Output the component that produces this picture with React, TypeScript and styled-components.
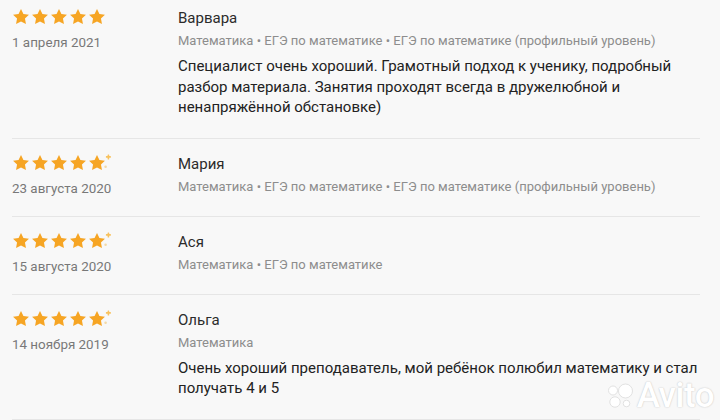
import React from "react";
import styled, { createGlobalStyle } from "styled-components";

const GlobalStyle = createGlobalStyle`
  html, body {
    margin: 0;
    padding: 0;
    background: #f8f8f8;
    font-family: Roboto, "Liberation Sans", Arial, sans-serif;
  }
`;

type Review = {
  name: string;
  date: string;
  tags: string[];
  text?: string;
  half?: boolean;
};

const reviews: Review[] = [
  {
    name: "Варвара",
    date: "1 апреля 2021",
    tags: [
      "Математика",
      "ЕГЭ по математике",
      "ЕГЭ по математике (профильный уровень)",
    ],
    text: "Специалист очень хороший. Грамотный подход к ученику, подробный разбор материала. Занятия проходят всегда в дружелюбной и ненапряжённой обстановке)",
  },
  {
    name: "Мария",
    date: "23 августа 2020",
    tags: [
      "Математика",
      "ЕГЭ по математике",
      "ЕГЭ по математике (профильный уровень)",
    ],
    half: true,
  },
  {
    name: "Ася",
    date: "15 августа 2020",
    tags: ["Математика", "ЕГЭ по математике"],
    half: true,
  },
  {
    name: "Ольга",
    date: "14 ноября 2019",
    tags: ["Математика"],
    text: "Очень хороший преподаватель, мой ребёнок полюбил математику и стал получать 4 и 5",
    half: true,
  },
];

const STAR =
  "M9 1l2.45 5 5.5.75-4 3.8 1 5.45L9 13.4l-4.95 2.6 1-5.45-4-3.8 5.5-.75z";

const Stars = ({ half }: { half?: boolean }) => (
  <svg width="112" height="18" viewBox="0 0 112 18">
    {[0, 1, 2, 3, 4].map((i) => (
      <path key={i} d={STAR} transform={`translate(${i * 19} 0)`} fill="#f6a524" />
    ))}
    {half && (
      <g fill="#f8c25e">
        <rect x="95.6" y="0.4" width="1.6" height="5" rx="0.5" />
        <rect x="93.9" y="2.1" width="5" height="1.6" rx="0.5" />
        <circle cx="93.6" cy="12.8" r="1.3" fill="#f3d9a6" />
      </g>
    )}
  </svg>
);

const Logo = () => (
  <Watermark>
    <svg width="30" height="28" viewBox="0 0 30 28">
      <g fill="#ffffff" stroke="#dedede" strokeWidth="0.9">
        <circle cx="19.5" cy="9" r="7" />
        <circle cx="7" cy="8.5" r="4.5" />
        <circle cx="9" cy="20" r="5.2" />
        <circle cx="20.5" cy="21.5" r="3.3" />
      </g>
    </svg>
    <LogoText>Avito</LogoText>
  </Watermark>
);

export default function App() {
  return (
    <Page>
      <GlobalStyle />
      <List>
        {reviews.map((r) => (
          <Item key={r.name}>
            <Side>
              <Stars half={r.half} />
              <DateText>{r.date}</DateText>
            </Side>
            <Body>
              <Name>{r.name}</Name>
              <Tags>{r.tags.join(" • ")}</Tags>
              {r.text && <Text>{r.text}</Text>}
            </Body>
          </Item>
        ))}
      </List>
      <Logo />
    </Page>
  );
}

const Page = styled.div`
  position: relative;
  width: 720px;
  height: 420px;
  overflow: hidden;
  background: #f8f8f8;
`;

const List = styled.div`
  display: flex;
  flex-direction: column;
  padding: 0 20px 0 12px;
`;

const Item = styled.div`
  display: flex;
  padding: 15px 0 18px;
  border-bottom: 1px solid #e6e6e6;

  &:first-child {
    padding-top: 8px;
  }
`;

const Side = styled.div`
  width: 166px;
  flex-shrink: 0;
  display: flex;
  flex-direction: column;
`;

const DateText = styled.div`
  margin-top: 8px;
  font-size: 13.4px;
  line-height: 18px;
  color: #787878;
`;

const Body = styled.div`
  flex: 1;
  display: flex;
  flex-direction: column;
`;

const Name = styled.div`
  font-size: 15px;
  line-height: 20px;
  color: #2b2b2b;
`;

const Tags = styled.div`
  margin-top: 3px;
  font-size: 13px;
  line-height: 20px;
  color: #8d8d8d;
`;

const Text = styled.div`
  margin: 5px 0 2px;
  font-size: 15px;
  line-height: 20.6px;
  color: #222222;
  max-width: 528px;
`;

const Watermark = styled.div`
  position: absolute;
  right: 6px;
  bottom: 7px;
  display: flex;
  align-items: center;
  gap: 1px;
`;

const LogoText = styled.span`
  font-family: Roboto, "Liberation Sans", Arial, sans-serif;
  font-size: 35px;
  font-weight: 500;
  line-height: 34px;
  color: #ffffff;
  letter-spacing: -0.5px;
  text-shadow: 0 0 1px #c8c8c8, 0 0 2px #d8d8d8;
`;
